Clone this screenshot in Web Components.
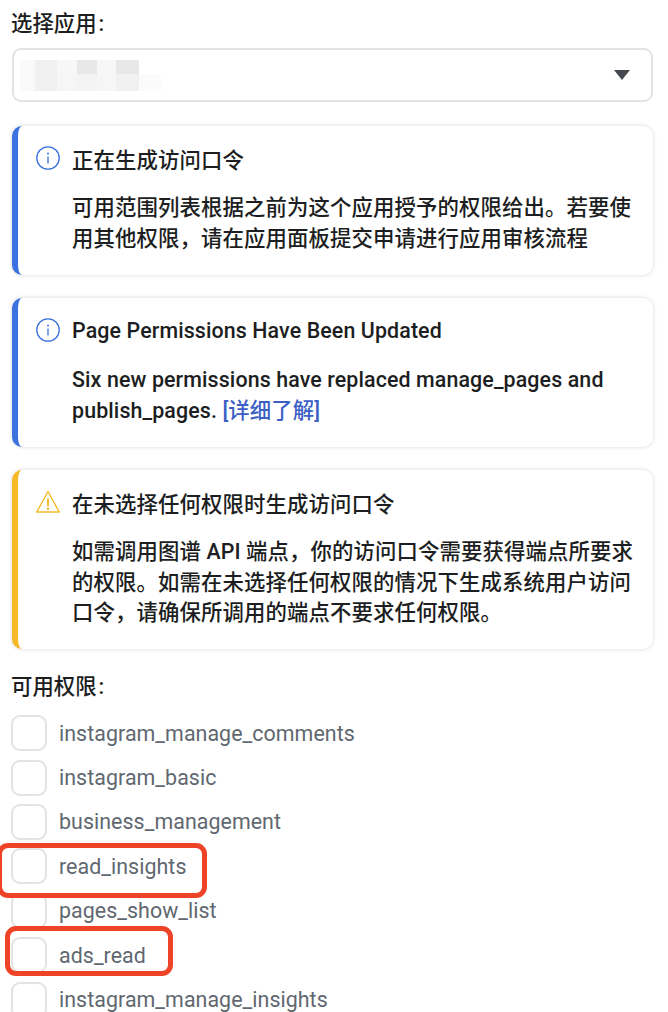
<!DOCTYPE html>
<html lang="zh">
<head>
<meta charset="utf-8">
<title>访问口令</title>
<style>
    html, body { margin: 0; height: 1012px; overflow: hidden; background: #fff; }
    body {
        font-family: Roboto, "Noto Sans CJK SC", sans-serif;
        font-size: 21.4px;
        color: #1c1e21;
    }
</style>
</head>
<body>
<token-page>
    <field-label slot="top">选择应用<span style="margin-left:2px">:</span></field-label>
    <app-select slot="top"></app-select>

    <notice-card kind="info" heading="正在生成访问口令">
        可用范围列表根据之前为这个应用授予的权限给出。若要使用其他权限，请在应用面板提交申请进行应用审核流程
    </notice-card>
    <notice-card kind="info" heading="Page Permissions Have Been Updated">
        Six new permissions have replaced manage_pages and<br>publish_pages. <a href="#" style="color:#3b5fc4;text-decoration:none">[详细了解]</a>
    </notice-card>
    <notice-card kind="warn" heading="在未选择任何权限时生成访问口令">
        如需调用图谱 API 端点，你的访问口令需要获得端点所要求的权限。如需在未选择任何权限的情况下生成系统用户访问口令，请确保所调用的端点不要求任何权限。
    </notice-card>

    <field-label slot="perms">可用权限<span style="margin-left:2px">:</span></field-label>
    <perm-item slot="perms">instagram_manage_comments</perm-item>
    <perm-item slot="perms">instagram_basic</perm-item>
    <perm-item slot="perms">business_management</perm-item>
    <perm-item slot="perms">read_insights</perm-item>
    <perm-item slot="perms">pages_show_list</perm-item>
    <perm-item slot="perms">ads_read</perm-item>
    <perm-item slot="perms">instagram_manage_insights</perm-item>

    <red-mark slot="marks" style="left:-3px;top:843px;width:210px;height:55px"></red-mark>
    <red-mark slot="marks" style="left:5px;top:926px;width:168px;height:50px"></red-mark>
</token-page>

<script>
class TokenPage extends HTMLElement {
    constructor() {
        super();
        this.attachShadow({ mode: 'open' });
        this.shadowRoot.innerHTML = `
            <style>
                :host {
                    display: block;
                    position: relative;
                    height: 1012px;
                    overflow: hidden;
                    padding: 9px 15px 0 12px;
                    box-sizing: border-box;
                }
                .cards {
                    display: flex;
                    flex-direction: column;
                    gap: 23.5px;
                    margin-bottom: 23px;
                }
                .perms { margin-top: 1px; }
                .perms ::slotted(field-label) { margin-bottom: 9px; }
            </style>
            <slot name="top"></slot>
            <div class="cards"><slot></slot></div>
            <div class="perms"><slot name="perms"></slot></div>
            <slot name="marks"></slot>
        `;
    }
}

class FieldLabel extends HTMLElement {
    constructor() {
        super();
        this.attachShadow({ mode: 'open' });
        this.shadowRoot.innerHTML = `
            <style>
                :host {
                    display: block;
                    line-height: 30px;
                    margin-left: -1px;
                    font-weight: 500;
                }
            </style>
            <slot></slot>
        `;
    }
}

class AppSelect extends HTMLElement {
    constructor() {
        super();
        this.attachShadow({ mode: 'open' });
        // the app name is pixelated out in the reference
        const top = ['#f9f9f9', '#f0f0f0', '#f7f7f7', '#e8e8e8', '#f7f7f7', '#e8e8e8', '#fff'];
        const bottom = ['#f9f9f9', '#f0f0f0', '#f6f6f6', '#f4f4f4', '#f6f6f6', '#f1f1f1', '#fbfbfb'];
        const widths = [15, 22, 20, 20, 19, 23, 22];
        const cells = [...top, ...bottom].map(c => `<i style="background:${c}"></i>`).join('');
        this.shadowRoot.innerHTML = `
            <style>
                :host {
                    display: flex;
                    align-items: center;
                    justify-content: space-between;
                    box-sizing: border-box;
                    height: 54px;
                    margin: 9px 0 24px;
                    padding: 0 21px 0 6px;
                    background: #fff;
                    border: 2px solid #e3e3e3;
                    border-radius: 9px;
                }
                .blur {
                    display: grid;
                    grid-template-columns: ${widths.map(w => w + 'px').join(' ')};
                    grid-template-rows: 14px 17px;
                }
                svg { display: block; }
            </style>
            <div class="blur">${cells}</div>
            <svg width="16" height="10" viewBox="0 0 16 10"><path d="M0 0H16L8 10Z" fill="#444950"/></svg>
        `;
    }
}

class NoticeCard extends HTMLElement {
    constructor() {
        super();
        this.attachShadow({ mode: 'open' });
    }

    connectedCallback() {
        const warn = this.getAttribute('kind') === 'warn';
        const color = warn ? '#f7b928' : '#3b72e0';
        const icon = warn
            ? `<path d="M12 1.5 L23.2 22 H.8 Z" fill="none" stroke="${color}" stroke-width="1.4" stroke-linejoin="round"/>
               <path d="M12 8.5V16" stroke="${color}" stroke-width="2"/>
               <circle cx="12" cy="18.8" r="1.2" fill="${color}"/>`
            : `<circle cx="12" cy="12" r="11.2" fill="none" stroke="${color}" stroke-width="1.3"/>
               <path d="M12 10.5V17.5" stroke="${color}" stroke-width="1.3"/>
               <circle cx="12" cy="7.5" r="1" fill="${color}"/>`;
        this.shadowRoot.innerHTML = `
            <style>
                :host {
                    display: block;
                    box-sizing: border-box;
                    padding: 17px 15px 20.5px 18px;
                    background: #fff;
                    border-left: 6px solid ${color};
                    border-radius: 10px;
                    box-shadow: 0 0 4px rgba(0, 0, 0, .16);
                    font-weight: 500;
                    letter-spacing: .11px;
                }
                .head {
                    display: flex;
                    align-items: center;
                    gap: 12px;
                    height: 30px;
                    margin-bottom: 20px;
                }
                svg { display: block; flex: none; }
                .body {
                    margin-left: 36px;
                    line-height: 30.5px;
                }
            </style>
            <div class="head">
                <svg width="24" height="24" viewBox="0 0 24 24">${icon}</svg>
                <span>${this.getAttribute('heading')}</span>
            </div>
            <div class="body"><slot></slot></div>
        `;
    }
}

class PermItem extends HTMLElement {
    constructor() {
        super();
        this.attachShadow({ mode: 'open' });
        this.shadowRoot.innerHTML = `
            <style>
                :host {
                    display: flex;
                    align-items: center;
                    gap: 12px;
                    height: 44.4px;
                    margin-left: -1px;
                    color: #606770;
                    letter-spacing: .05px;
                }
                .box {
                    flex: none;
                    box-sizing: border-box;
                    width: 36px;
                    height: 36px;
                    border: 2px solid #e3e3e3;
                    border-radius: 9px;
                    background: #fff;
                }
            </style>
            <span class="box"></span>
            <slot></slot>
        `;
    }
}

class RedMark extends HTMLElement {
    constructor() {
        super();
        this.attachShadow({ mode: 'open' });
        this.shadowRoot.innerHTML = `
            <style>
                :host {
                    position: absolute;
                    box-sizing: border-box;
                    border: 5px solid #ee4326;
                    border-radius: 11px;
                }
            </style>
        `;
    }
}

customElements.define('token-page', TokenPage);
customElements.define('field-label', FieldLabel);
customElements.define('app-select', AppSelect);
customElements.define('notice-card', NoticeCard);
customElements.define('perm-item', PermItem);
customElements.define('red-mark', RedMark);
</script>
</body>
</html>
